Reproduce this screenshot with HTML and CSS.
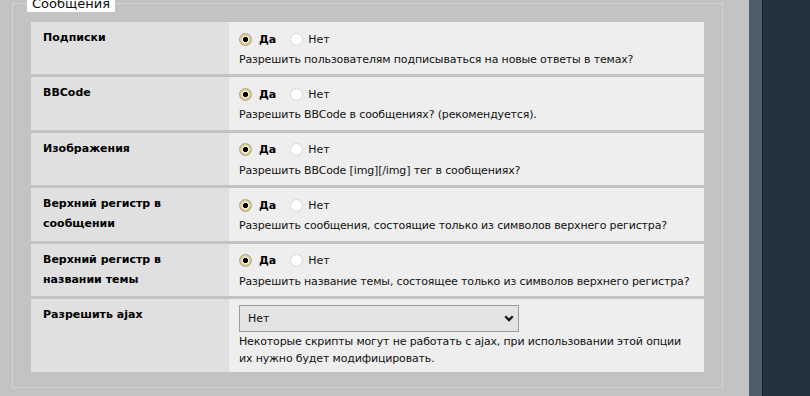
FILE: index.html
```html
<!DOCTYPE html>
<html lang="ru">
<head>
<meta charset="utf-8">
<title>Сообщения</title>
<link rel="stylesheet" href="styles.css">
</head>
<body>
<div class="page">
  <main class="content">
    <fieldset class="group">
      <legend class="group-title">Сообщения</legend>
      <div class="options">
        <div class="row">
          <div class="label">Подписки</div>
          <div class="value">
            <div class="choice">
              <label class="opt"><input type="radio" name="r1" checked><b>Да</b></label>
              <label class="opt"><input type="radio" name="r1">Нет</label>
            </div>
            <div class="desc">Разрешить пользователям подписываться на новые ответы в темах?</div>
          </div>
        </div>
        <div class="row">
          <div class="label">BBCode</div>
          <div class="value">
            <div class="choice">
              <label class="opt"><input type="radio" name="r2" checked><b>Да</b></label>
              <label class="opt"><input type="radio" name="r2">Нет</label>
            </div>
            <div class="desc">Разрешить BBCode в сообщениях? (рекомендуется).</div>
          </div>
        </div>
        <div class="row">
          <div class="label">Изображения</div>
          <div class="value">
            <div class="choice">
              <label class="opt"><input type="radio" name="r3" checked><b>Да</b></label>
              <label class="opt"><input type="radio" name="r3">Нет</label>
            </div>
            <div class="desc">Разрешить BBCode [img][/img] тег в сообщениях?</div>
          </div>
        </div>
        <div class="row">
          <div class="label">Верхний регистр в сообщении</div>
          <div class="value">
            <div class="choice">
              <label class="opt"><input type="radio" name="r4" checked><b>Да</b></label>
              <label class="opt"><input type="radio" name="r4">Нет</label>
            </div>
            <div class="desc">Разрешить сообщения, состоящие только из символов верхнего регистра?</div>
          </div>
        </div>
        <div class="row">
          <div class="label">Верхний регистр в названии темы</div>
          <div class="value">
            <div class="choice">
              <label class="opt"><input type="radio" name="r5" checked><b>Да</b></label>
              <label class="opt"><input type="radio" name="r5">Нет</label>
            </div>
            <div class="desc">Разрешить название темы, состоящее только из символов верхнего регистра?</div>
          </div>
        </div>
        <div class="row row-tall">
          <div class="label">Разрешить ajax</div>
          <div class="value">
            <div class="select-wrap">
              <select class="select">
                <option selected>Нет</option>
                <option>Да</option>
              </select>
              <svg class="chevron" width="10" height="7" viewBox="0 0 10 7" aria-hidden="true"><polyline points="1.3,1.3 5,5 8.7,1.3" fill="none" stroke="#111" stroke-width="2.3"/></svg>
            </div>
            <div class="desc">Некоторые скрипты могут не работать с ajax, при использовании этой опции их нужно будет модифицировать.</div>
          </div>
        </div>
      </div>
    </fieldset>
  </main>
  <div class="edge"></div>
  <div class="dark"></div>
</div>
</body>
</html>
```
FILE: styles.css
```css
html, body {
  margin: 0;
  padding: 0;
  height: 100%;
  overflow: hidden;
}
body {
  font-family: "DejaVu Sans", Verdana, sans-serif;
  font-size: 11px;
  color: #111;
  background: #22323d;
}
.page {
  display: flex;
  height: 396px;
}
.content {
  flex: none;
  width: 749px;
  background: #c3c3c3;
  padding: 0 0 0 12px;
  box-sizing: border-box;
}
.group {
  margin: -5px 0 0 0;
  width: 711px;
  box-sizing: border-box;
  border: 1px solid #d2d2d2;
  padding: 10px 18px 15px 18px;
  min-width: 0;
}
.group-title {
  background: #fff;
  font-size: 13px;
  line-height: 17px;
  padding: 0 5px 0 5px;
  margin-left: -4px;
  color: #0d0d0d;
}
.options {
  display: flex;
  flex-direction: column;
  gap: 3px;
}
.row {
  display: flex;
  height: 52.4px;
}
.row-tall {
  height: 73px;
}
.label {
  flex: none;
  width: 198px;
  box-sizing: border-box;
  background: #dfe0df;
  padding: 6px 30px 6px 12px;
  font-weight: bold;
  line-height: 20px;
  color: #000;
}
.value {
  flex: 1;
  background: #eeeeee;
  padding: 6px 10px 5px 10px;
}
.choice {
  display: flex;
  align-items: center;
  height: 22px;
  gap: 14px;
}
.opt {
  display: flex;
  align-items: center;
}
.opt b {
  color: #000;
}
.opt input {
  appearance: none;
  -webkit-appearance: none;
  width: 13px;
  height: 13px;
  margin: 0 5px 0 0;
  border-radius: 50%;
  box-sizing: border-box;
  border: 1px solid #d6d6d6;
  background: #fff;
}
.opt input:checked {
  border: 1px solid #b3a57e;
  background: radial-gradient(circle, #000 0 2.4px, #f4ecd6 2.9px 3.6px, #d9c894 4.4px);
  margin-right: 7px;
}
.desc {
  line-height: 17px;
  margin-top: 1px;
  color: #111;
  letter-spacing: -0.15px;
  white-space: nowrap;
}
.row-tall .desc {
  margin-top: 0;
  white-space: normal;
}
.select-wrap {
  position: relative;
  width: 280px;
  height: 27px;
  margin-bottom: 1px;
}
.select {
  appearance: none;
  -webkit-appearance: none;
  width: 280px;
  height: 27px;
  box-sizing: border-box;
  border: 1px solid #9c9c9c;
  border-radius: 0;
  background: #e3e3e3;
  font-family: "DejaVu Sans", Verdana, sans-serif;
  font-size: 11px;
  color: #111;
  padding: 0 0 0 8px;
  margin: 0;
}
.chevron {
  position: absolute;
  right: 5px;
  top: 10px;
  pointer-events: none;
}
.edge {
  flex: none;
  width: 13px;
  background: #4e5e69;
  border-right: 1px solid #17242e;
}
.dark {
  flex: 1;
  background: #22323d;
}
```
